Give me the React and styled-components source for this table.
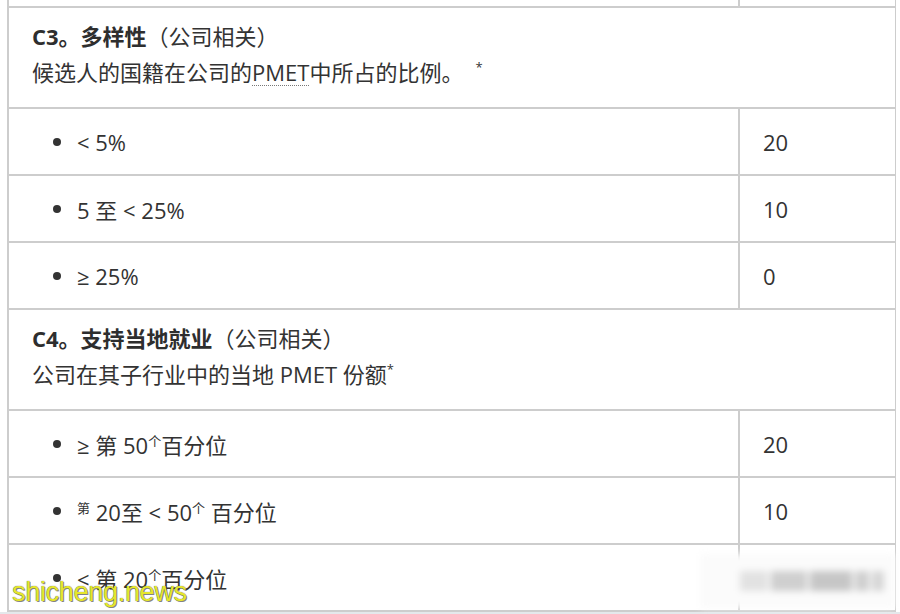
import React from "react";
import styled, { createGlobalStyle } from "styled-components";

const GlobalStyle = createGlobalStyle`
  html, body {
    margin: 0;
    padding: 0;
    background: #e4e8eb;
  }
  body {
    font-family: "Open Sans", "Noto Sans CJK SC", sans-serif;
    color: #333;
  }
`;

const Page = styled.div`
  position: relative;
  width: 900px;
  height: 614px;
  overflow: hidden;
`;

const Sheet = styled.div`
  background: #fff;
  padding: 0 4px 0 7px;
`;

const Table = styled.div`
  display: grid;
  grid-template-columns: 729px 155px;
  column-gap: 2px;
  background: #cdcdcd;
  border-left: 2px solid #cdcdcd;
  border-right: 2px solid #cdcdcd;
  row-gap: 2px;
  padding-bottom: 2px;
`;

const Stub = styled.div`
  height: 6px;
  background: #fff;
`;

const Header = styled.div`
  grid-column: 1 / -1;
  height: 99px;
  box-sizing: border-box;
  background: #fff;
  padding: 10px 23px 0;
  font-size: 22px;
  line-height: 36px;
`;

const Title = styled.div`
  b {
    font-weight: 700;
    color: #2e2e2e;
  }
`;

const Abbr = styled.span`
  text-decoration: underline dotted #777;
  text-decoration-thickness: 1px;
  text-underline-offset: 4px;
`;

const Star = styled.sup`
  font-size: 13px;
  line-height: 0;
  vertical-align: 9px;
  margin-left: ${(p) => p.gap || 0}px;
`;

const Cell = styled.div`
  height: 65px;
  background: #fff;
  display: flex;
  align-items: center;
  font-size: 22px;
  padding-left: ${(p) => (p.value ? 23 : 44)}px;
  box-sizing: border-box;
`;

const Bullet = styled.span`
  width: 8px;
  height: 8px;
  border-radius: 50%;
  background: #333;
  margin-right: 16px;
  flex: none;
`;

const Tiny = styled.sup`
  font-size: 13px;
  line-height: 0;
  vertical-align: 8px;
`;

const Watermark = styled.div`
  position: absolute;
  left: 12px;
  top: 577px;
  font-family: "Liberation Sans", sans-serif;
  font-size: 27px;
  color: #e6e62c;
  letter-spacing: -0.3px;
  text-shadow: 0 0 1px #444, 1px 1px 0 rgba(60, 60, 60, 0.6);
`;

const BlurPatch = styled.div`
  position: absolute;
  left: 700px;
  top: 554px;
  width: 195px;
  height: 54px;
  background: #fbfbfb;
  filter: blur(3.5px);
  display: flex;
  align-items: center;
  gap: 3px;
  padding-left: 40px;
  box-sizing: border-box;
`;

const Smudge = styled.span`
  display: block;
  width: ${(p) => p.w}px;
  height: 20px;
  background: ${(p) => p.c || "#cfcfcf"};
`;

const rows = [
  {
    title: "C3。多样性",
    sub: (
      <>
        候选人的国籍在公司的<Abbr>PMET</Abbr>中所占的比例。<Star gap={12}>*</Star>
      </>
    ),
    items: [
      { label: "< 5%", value: "20" },
      { label: "5 至 < 25%", value: "10" },
      { label: "≥ 25%", value: "0" },
    ],
  },
  {
    title: "C4。支持当地就业",
    sub: (
      <>
        公司在其子行业中的当地 PMET 份额<Star>*</Star>
      </>
    ),
    items: [
      {
        label: (
          <>
            ≥ 第 50<Tiny>个</Tiny>百分位
          </>
        ),
        value: "20",
      },
      {
        label: (
          <>
            <Tiny>第</Tiny> 20至 &lt; 50<Tiny>个</Tiny> 百分位
          </>
        ),
        value: "10",
      },
      {
        label: (
          <>
            &lt; 第 20<Tiny>个</Tiny>百分位
          </>
        ),
        value: "",
      },
    ],
  },
];

export default function App() {
  return (
    <Page>
      <GlobalStyle />
      <Sheet>
        <Table>
          <Stub />
          <Stub />
          {rows.map((r) => (
            <React.Fragment key={r.title}>
              <Header>
                <Title>
                  <b>{r.title}</b>（公司相关）
                </Title>
                <div>{r.sub}</div>
              </Header>
              {r.items.map((it, i) => (
                <React.Fragment key={i}>
                  <Cell>
                    <Bullet />
                    <span>{it.label}</span>
                  </Cell>
                  <Cell value>{it.value}</Cell>
                </React.Fragment>
              ))}
            </React.Fragment>
          ))}
        </Table>
      </Sheet>
      <BlurPatch>
        <Smudge w={28} c="#e2e2e2" />
        <Smudge w={36} />
        <Smudge w={42} c="#c6c6c6" />
        <Smudge w={14} />
        <Smudge w={12} c="#d6d6d6" />
      </BlurPatch>
      <Watermark>shicheng.news</Watermark>
    </Page>
  );
}
